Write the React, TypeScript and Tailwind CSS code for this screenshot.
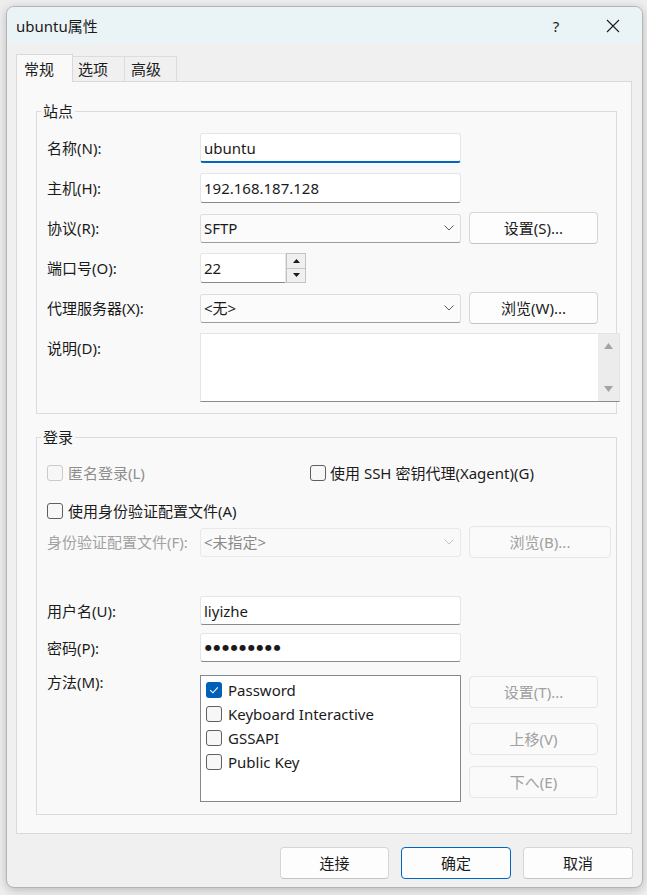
import React from "react";
import clsx from "clsx";

const FONT = "font-['Noto_Sans','Noto_Sans_CJK_SC',sans-serif]";

function Chevron({ muted = false }: { muted?: boolean }) {
  return (
    <svg width="10" height="6" viewBox="0 0 10 6" className="shrink-0">
      <path
        d="M0.5 0.5 5 5 9.5 0.5"
        fill="none"
        stroke={muted ? "#c4c4c4" : "#5c5c5c"}
        strokeWidth="1"
      />
    </svg>
  );
}

function Box({ checked = false, disabled = false }: { checked?: boolean; disabled?: boolean }) {
  if (checked) {
    return (
      <span className="flex h-[16px] w-[16px] shrink-0 items-center justify-center rounded-[3px] bg-[#005fb8]">
        <svg width="10" height="8" viewBox="0 0 10 8">
          <path d="M1.2 4.2 3.9 6.8 8.8 1.3" fill="none" stroke="#ffffff" strokeWidth="1.1" />
        </svg>
      </span>
    );
  }
  return (
    <span
      className={clsx(
        "h-[16px] w-[16px] shrink-0 rounded-[3px] border bg-[#f7f7f7]",
        disabled ? "border-[#cacaca]" : "border-[#5f5f5f]"
      )}
    />
  );
}

function Btn({
  children,
  disabled = false,
  primary = false,
  className,
}: {
  children: React.ReactNode;
  disabled?: boolean;
  primary?: boolean;
  className?: string;
}) {
  return (
    <button
      type="button"
      className={clsx(
        "flex h-[32px] shrink-0 items-center justify-center rounded-[4px] border text-[15px]",
        disabled
          ? "border-[#e6e6e6] bg-[#fafafa] text-[#a0a0a0]"
          : primary
          ? "border-[#0067c0] bg-[#fdfdfd] text-[#1b1b1b]"
          : "border-[#d6d6d6] border-b-[#c4c4c4] bg-[#fdfdfd] text-[#1b1b1b]",
        className
      )}
    >
      {children}
    </button>
  );
}

function Field({
  children,
  focused = false,
  className,
}: {
  children?: React.ReactNode;
  focused?: boolean;
  className?: string;
}) {
  return (
    <div
      className={clsx(
        "flex shrink-0 items-center rounded-[3px] border border-[#e5e5e5] bg-white pl-[3px] text-[15px] text-[#1b1b1b]",
        focused ? "border-b-2 border-b-[#0067c0]" : "border-b-[#8a8a8a]",
        className
      )}
    >
      {children}
    </div>
  );
}

function Combo({ value, disabled = false }: { value: string; disabled?: boolean }) {
  return (
    <div
      className={clsx(
        "flex h-[29px] w-[261px] shrink-0 items-center justify-between rounded-[3px] border pl-[3px] pr-[6px] text-[15px]",
        disabled
          ? "border-[#e9e9e9] bg-[#f9f9f9] text-[#8a8a8a]"
          : "border-[#dddddd] border-b-[#9c9c9c] bg-[#fbfbfb] text-[#1b1b1b]"
      )}
    >
      <span>{value}</span>
      <Chevron muted={disabled} />
    </div>
  );
}

function Label({ children, muted = false }: { children: React.ReactNode; muted?: boolean }) {
  return (
    <span className={clsx("w-[153px] shrink-0 text-[15px]", muted ? "text-[#a2a2a2]" : "text-[#1b1b1b]")}>
      {children}
    </span>
  );
}

const methods = [
  { name: "Password", on: true },
  { name: "Keyboard Interactive", on: false },
  { name: "GSSAPI", on: false },
  { name: "Public Key", on: false },
];

export default function App() {
  return (
    <div className={clsx("h-[895px] w-[647px] overflow-hidden bg-[#eeeeee] pl-[6px] pt-[6px] leading-[20px]", FONT)}>
      <div className="w-[637px] overflow-hidden rounded-[8px] border border-[#b4b4b4] bg-[#f0f0f0] shadow-[0_2px_10px_rgba(0,0,0,0.22)]">
        {/* title bar */}
        <div className="flex h-[37px] items-center bg-[#eaf3f6] pl-[9px] pr-[22px] text-[15px] text-[#1b1b1b]">
          <span>ubuntu属性</span>
          <span className="ml-auto w-[20px] text-center">?</span>
          <svg width="14" height="14" viewBox="0 0 14 14" className="ml-[40px]">
            <path d="M1 1 13 13 M13 1 1 13" stroke="#1b1b1b" strokeWidth="1.1" />
          </svg>
        </div>

        <div className="pl-[9px] pt-[10px]">
          {/* tabs */}
          <div className="flex items-end text-[15px] text-[#1b1b1b]">
            <div className="relative z-10 -mb-px flex h-[28px] w-[57px] items-center border border-b-0 border-[#d9d9d9] bg-[#f9f9f9] pl-[7px]">
              常规
            </div>
            <div className="flex h-[25px] w-[52px] items-center border border-l-0 border-b-0 border-[#dcdcdc] pl-[5px]">
              选项
            </div>
            <div className="flex h-[25px] w-[52px] items-center border border-l-0 border-b-0 border-[#dcdcdc] pl-[6px]">
              高级
            </div>
          </div>

          {/* panel */}
          <div className="w-[616px] border border-[#d9d9d9] bg-[#f9f9f9] pb-[18px] pl-[19px] pt-[19px]">
            <fieldset className="w-[581px] min-w-0 border border-[#dcdcdc] pb-[11px] pl-[10px] pt-[12px]">
              <legend className="-ml-[6px] px-[2px] text-[15px] leading-[20px] text-[#1b1b1b]">站点</legend>
              <div className="flex flex-col gap-[10px]">
                <div className="flex h-[30px] items-center">
                  <Label>名称(N):</Label>
                  <Field focused className="h-[30px] w-[261px]">ubuntu</Field>
                </div>
                <div className="flex h-[30px] items-center">
                  <Label>主机(H):</Label>
                  <Field className="h-[30px] w-[261px]">192.168.187.128</Field>
                </div>
                <div className="flex h-[30px] items-center">
                  <Label>协议(R):</Label>
                  <Combo value="SFTP" />
                  <Btn className="ml-[8px] w-[129px]">设置(S)...</Btn>
                </div>
                <div className="flex h-[30px] items-center">
                  <Label>端口号(O):</Label>
                  <Field className="h-[30px] w-[86px] rounded-r-none">22</Field>
                  <div className="flex h-[30px] w-[20px] flex-col border border-[#c2c2c2] bg-[#f0f0f0]">
                    <div className="flex flex-1 items-center justify-center border-b border-[#c8c8c8]">
                      <svg width="7" height="4" viewBox="0 0 7 4">
                        <path d="M0 4 3.5 0 7 4Z" fill="#1b1b1b" />
                      </svg>
                    </div>
                    <div className="flex flex-1 items-center justify-center">
                      <svg width="7" height="4" viewBox="0 0 7 4">
                        <path d="M0 0 3.5 4 7 0Z" fill="#1b1b1b" />
                      </svg>
                    </div>
                  </div>
                </div>
                <div className="flex h-[30px] items-center">
                  <Label>代理服务器(X):</Label>
                  <Combo value="<无>" />
                  <Btn className="ml-[8px] w-[129px]">浏览(W)...</Btn>
                </div>
                <div className="flex items-start">
                  <span className="flex h-[30px] items-center">
                    <Label>说明(D):</Label>
                  </span>
                  <div className="flex h-[69px] w-[420px] shrink-0 justify-end border border-[#e5e5e5] border-b-[#8a8a8a] bg-white">
                    <div className="flex w-[21px] flex-col items-center justify-between bg-[#ececec] py-[9px]">
                      <svg width="9" height="6" viewBox="0 0 9 6">
                        <path d="M0 6 4.5 0 9 6Z" fill="#a3a3a3" />
                      </svg>
                      <svg width="9" height="6" viewBox="0 0 9 6">
                        <path d="M0 0 4.5 6 9 0Z" fill="#a3a3a3" />
                      </svg>
                    </div>
                  </div>
                </div>
              </div>
            </fieldset>

            <div className="mt-[13px]">
              <fieldset className="w-[581px] min-w-0 border border-[#dcdcdc] pb-[12px] pl-[10px] pt-[16px]">
                <legend className="-ml-[6px] px-[2px] text-[15px] leading-[20px] text-[#1b1b1b]">登录</legend>

                <div className="flex h-[20px] items-center text-[15px]">
                  <div className="flex w-[263px] items-center gap-[5px] text-[#8d8d8d]">
                    <Box disabled />
                    <span>匿名登录(L)</span>
                  </div>
                  <div className="flex items-center gap-[4px] text-[#1b1b1b]">
                    <Box />
                    <span>使用 SSH 密钥代理(Xagent)(G)</span>
                  </div>
                </div>

                <div className="mt-[18px] flex h-[20px] items-center gap-[5px] text-[15px] text-[#1b1b1b]">
                  <Box />
                  <span>使用身份验证配置文件(A)</span>
                </div>

                <div className="mt-[5px] flex h-[32px] items-center">
                  <Label muted>身份验证配置文件(F):</Label>
                  <Combo value="<未指定>" disabled />
                  <Btn disabled className="ml-[8px] w-[142px]">
                    浏览(B)...
                  </Btn>
                </div>

                <div className="mt-[38px] flex h-[29px] items-center">
                  <Label>用户名(U):</Label>
                  <Field className="h-[29px] w-[261px]">liyizhe</Field>
                </div>

                <div className="mt-[8px] flex h-[29px] items-center">
                  <Label>密码(P):</Label>
                  <Field className="h-[29px] w-[261px] pl-[4px]">
                    <span className="font-['DejaVu_Sans',sans-serif] text-[8px] tracking-[1.6px]">●●●●●●●●●</span>
                  </Field>
                </div>

                <div className="mt-[13px] flex items-start">
                  <span className="flex h-[14px] items-center">
                    <Label>方法(M):</Label>
                  </span>
                  <div className="h-[127px] w-[261px] shrink-0 border border-[#848890] bg-white pl-[5px] pt-[2px]">
                    {methods.map((m) => (
                      <div key={m.name} className="flex h-[24px] items-center gap-[6px] text-[15px] text-[#1b1b1b]">
                        <Box checked={m.on} />
                        <span>{m.name}</span>
                      </div>
                    ))}
                  </div>
                  <div className="ml-[8px] flex flex-col pt-[1px]">
                    <Btn disabled className="w-[129px]">
                      设置(T)...
                    </Btn>
                    <Btn disabled className="mt-[15px] w-[129px]">
                      上移(V)
                    </Btn>
                    <Btn disabled className="mt-[11px] w-[129px]">
                      下へ(E)
                    </Btn>
                  </div>
                </div>
              </fieldset>
            </div>
          </div>
        </div>

        {/* bottom buttons */}
        <div className="flex justify-end gap-[12px] pb-[8px] pr-[9px] pt-[13px]">
          <Btn className="w-[109px]">连接</Btn>
          <Btn primary className="w-[110px]">
            确定
          </Btn>
          <Btn className="w-[110px]">取消</Btn>
        </div>
      </div>
    </div>
  );
}
